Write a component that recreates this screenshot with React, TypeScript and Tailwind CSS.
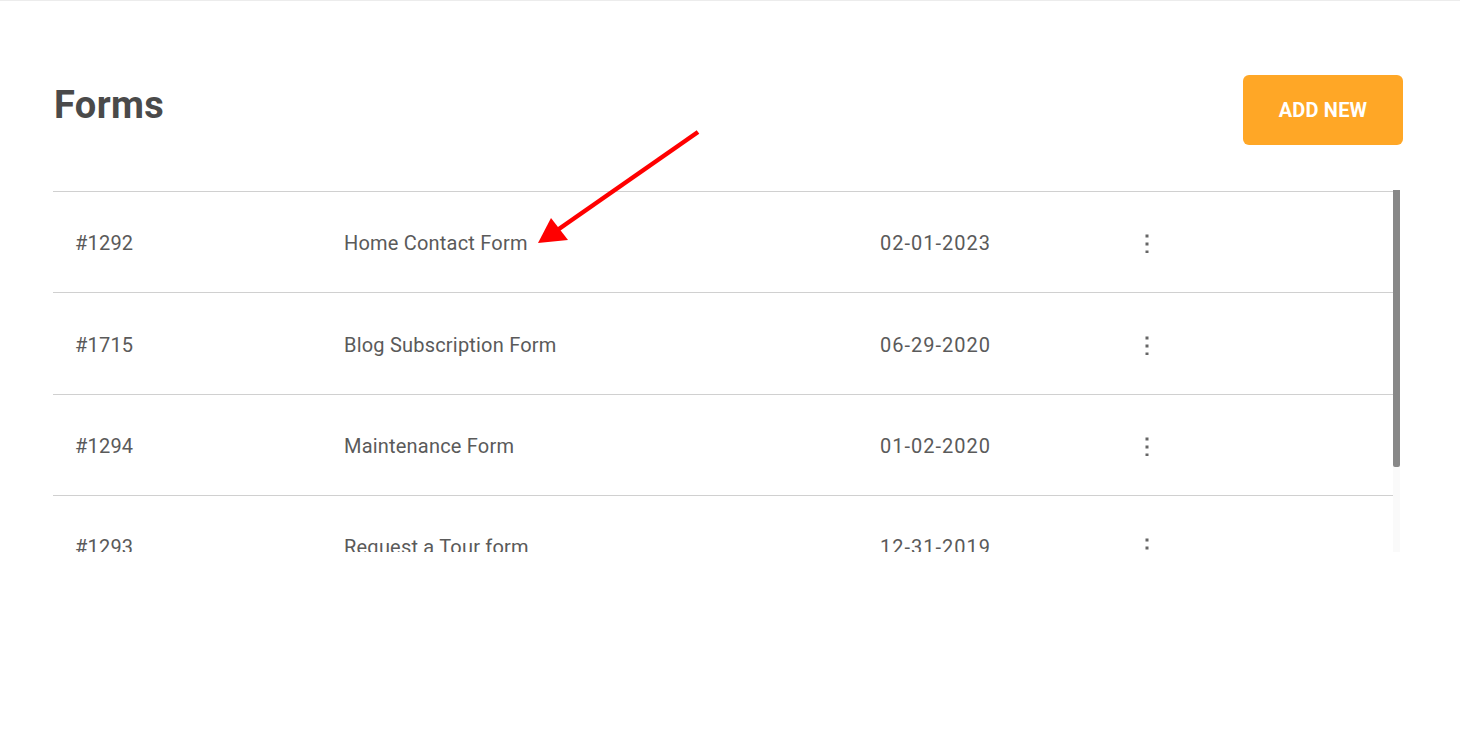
import React from "react";

type FormRow = { id: string; name: string; date: string; h: string };

const forms: FormRow[] = [
  { id: "#1292", name: "Home Contact Form", date: "02-01-2023", h: "h-[101px]" },
  { id: "#1715", name: "Blog Subscription Form", date: "06-29-2020", h: "h-[102px]" },
  { id: "#1294", name: "Maintenance Form", date: "01-02-2020", h: "h-[101px]" },
  { id: "#1293", name: "Request a Tour form", date: "12-31-2019", h: "h-[101px]" },
];

function DotsIcon() {
  return (
    <svg width="4" height="20" viewBox="0 0 4 20" className="text-[#666]">
      <rect x="0.5" y="1.5" width="3" height="3" fill="currentColor" />
      <rect x="0.5" y="9.5" width="3" height="3" fill="currentColor" />
      <rect x="0.5" y="17.5" width="3" height="3" fill="currentColor" />
    </svg>
  );
}

export default function App() {
  return (
    <div
      className="relative w-[1460px] h-[737px] bg-white border-t border-[#ececec] overflow-hidden"
      style={{ fontFamily: "Roboto, 'Noto Sans', sans-serif" }}
    >
      <div className="pl-[53px] pr-[57px]">
        {/* header */}
        <div className="flex justify-between items-start pt-[74px]">
          <h1 className="mt-[8px] pl-[1px] text-[38px] leading-[44px] font-bold text-[#4a4a4a] tracking-[0.01em]">Forms</h1>
          <button className="w-[160px] h-[70px] rounded-[6px] bg-[#ffa726] text-white text-[20px] font-bold tracking-[0.01em]">
            ADD NEW
          </button>
        </div>

        {/* table with its scrollbar */}
        <div className="mt-[45px] mr-[3px] h-[362px] flex">
          <div className="flex-1 overflow-hidden pt-[1px]">
            <div className="border-t border-[#d0d0d0]">
              {forms.map((f) => (
                <div
                  key={f.id}
                  className={`flex items-center ${f.h} pt-[2px] border-b border-[#d0d0d0] text-[20px] text-[#5a5a5a] tracking-[0.01em]`}
                >
                  <div className="w-[291px] pl-[22px]">{f.id}</div>
                  <div className="w-[536px]">{f.name}</div>
                  <div className="w-[265px] tracking-[0.05em]">{f.date}</div>
                  <div className="flex items-center">
                    <DotsIcon />
                  </div>
                </div>
              ))}
            </div>
          </div>
          <div className="w-[7px] bg-[#fafafa]">
            <div className="h-[277px] bg-[#888] rounded-b-[2px]" />
          </div>
        </div>
      </div>

      {/* annotation arrow */}
      <svg className="absolute left-0 top-0 pointer-events-none" width="1460" height="737">
        <line x1="698" y1="131" x2="556" y2="230" stroke="#ff0000" strokeWidth="4.5" />
        <polygon points="538,242 551,217 568,239" fill="#ff0000" />
      </svg>
    </div>
  );
}
